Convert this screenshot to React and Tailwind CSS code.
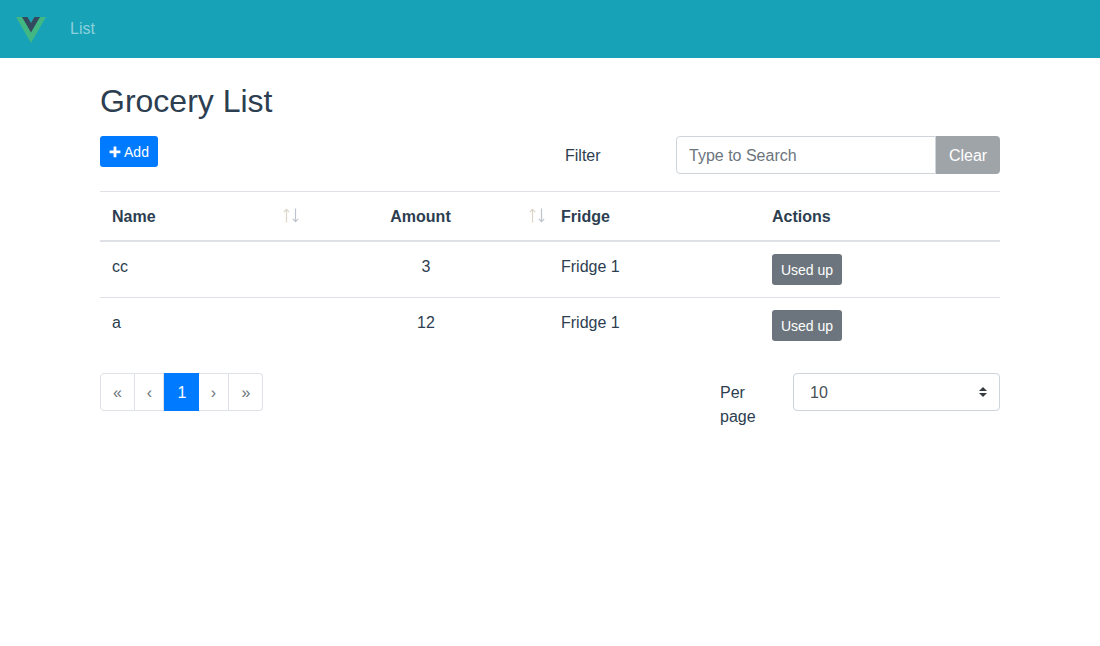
import React from "react";

const SortIcon = ({ className }) => (
  <svg width="16" height="15" viewBox="0 0 16 15" fill="none" strokeWidth="1.2" className={`absolute ${className}`}>
    <path d="M3.5 1.5v13M0.8 4.2l2.7-2.9 2.7 2.9" stroke="#dcd6c9" />
    <path d="M12.5 0.5v13M9.8 10.8l2.7 2.9 2.7-2.9" stroke="#bec4cc" />
  </svg>
);

const rows = [
  { name: "cc", amount: "3" },
  { name: "a", amount: "12" },
];

export default function App() {
  return (
    <div className="min-h-[646px] bg-white text-[#2c3e50] text-[16px] leading-6" style={{ fontFamily: '"Liberation Sans", Arial, sans-serif' }}>
      <nav className="h-[58px] bg-[#17a2b8] flex items-center pl-4">
        <svg width="30" height="26" viewBox="0 0 261.76 226.69" className="mt-[1px]">
          <path fill="#41b883" d="M161.096.001l-30.225 52.351L100.647.001H-.005l130.877 226.688L261.749.001z" />
          <path fill="#34495e" d="M161.096.001l-30.225 52.351L100.647.001H52.346l78.526 136.01L209.398.001z" />
        </svg>
        <a className="ml-6 text-white/50">List</a>
      </nav>

      <main className="mx-[100px] pt-6">
        <h1 className="text-[32px] leading-[38px] font-medium mb-4">Grocery List</h1>

        <div className="flex items-start mb-[17px]">
          <button className="h-[31px] w-[58px] pt-[2px] bg-[#007bff] text-white text-[14px] leading-[21px] rounded-[3px] flex items-center justify-center">
            <svg width="12" height="12" viewBox="0 0 12 12" className="mr-[3px] mt-[-2px]">
              <path fill="#fff" d="M4.6 0.5h2.8v3.9h4v2.8h-4v4.1H4.6V7.2h-4V4.4h4z" />
            </svg>
            Add
          </button>
          <div className="ml-[407px] w-[111px] h-[38px] pt-[2px] flex items-center">Filter</div>
          <div className="flex w-[324px] h-[38px]">
            <input
              placeholder="Type to Search"
              className="w-[260px] h-full border border-[#ced4da] rounded-l-[4px] px-3 pt-[2px] outline-none placeholder:text-[#6c757d] placeholder:opacity-100"
            />
            <button className="w-[64px] h-full pt-[2px] bg-[#9fa4a9] text-white rounded-r-[4px]">Clear</button>
          </div>
        </div>

        <table className="w-[900px] table-fixed border-separate border-spacing-0">
          <thead>
            <tr>
              <th className="relative w-[211px] text-left font-bold px-3 pt-[13px] pb-[11px] border-t border-t-[#dee2e6] border-b-2 border-b-[#dee2e6]">
                Name
                <SortIcon className="right-[12px] top-[16px]" />
              </th>
              <th className="relative w-[238px] text-center font-bold pl-3 pr-[31px] pt-[13px] pb-[11px] border-t border-t-[#dee2e6] border-b-2 border-b-[#dee2e6]">
                Amount
                <SortIcon className="right-[4px] top-[16px]" />
              </th>
              <th className="w-[211px] text-left font-bold px-3 pt-[13px] pb-[11px] border-t border-t-[#dee2e6] border-b-2 border-b-[#dee2e6]">Fridge</th>
              <th className="w-[240px] text-left font-bold px-3 pt-[13px] pb-[11px] border-t border-t-[#dee2e6] border-b-2 border-b-[#dee2e6]">Actions</th>
            </tr>
          </thead>
          <tbody>
            {rows.map((r, i) => (
              <tr key={r.name}>
                <td className={`px-3 pt-[13px] pb-[11px] align-top ${i > 0 ? "border-t border-t-[#dee2e6]" : ""}`}>{r.name}</td>
                <td className={`pl-3 pr-[20px] pt-[13px] pb-[11px] align-top text-center ${i > 0 ? "border-t border-t-[#dee2e6]" : ""}`}>{r.amount}</td>
                <td className={`px-3 pt-[13px] pb-[11px] align-top ${i > 0 ? "border-t border-t-[#dee2e6]" : ""}`}>Fridge 1</td>
                <td className={`p-3 align-top ${i > 0 ? "border-t border-t-[#dee2e6]" : ""}`}>
                  <button className="block w-[70px] h-[31px] pt-[2px] bg-[#6c757d] text-white text-[14px] leading-[21px] rounded-[3px]">Used up</button>
                </td>
              </tr>
            ))}
          </tbody>
        </table>

        <div className="flex items-start mt-5">
          <ul className="flex h-[38px] text-[#6c757d]">
            <li className="w-[35px] pt-[2px] flex items-center justify-center border border-[#dee2e6] rounded-l-[4px]">«</li>
            <li className="w-[29px] pt-[2px] pl-[1px] flex items-center justify-center border-y border-r border-[#dee2e6]">‹</li>
            <li className="w-[35px] pt-[2px] pl-[1px] flex items-center justify-center bg-[#007bff] text-white">1</li>
            <li className="w-[30px] pt-[2px] flex items-center justify-center border-y border-r border-[#dee2e6]">›</li>
            <li className="w-[34px] pt-[2px] pl-[1px] flex items-center justify-center border-y border-r border-[#dee2e6] rounded-r-[4px]">»</li>
          </ul>
          <div className="ml-[457px] w-[73px] pt-[8px] pr-6">Per page</div>
          <div className="relative w-[207px] h-[38px]">
            <select className="w-full h-full appearance-none border border-[#ced4da] rounded-[4px] bg-white pl-4 pr-7 pt-[2px] outline-none text-[#495057]" defaultValue="10">
              <option>10</option>
              <option>25</option>
              <option>50</option>
            </select>
            <svg width="8" height="10" viewBox="0 0 4 5" className="absolute right-[13px] top-[14px] pointer-events-none">
              <path fill="#343a40" d="M2 0L0 2h4zm0 5L0 3h4z" />
            </svg>
          </div>
        </div>
      </main>
    </div>
  );
}
